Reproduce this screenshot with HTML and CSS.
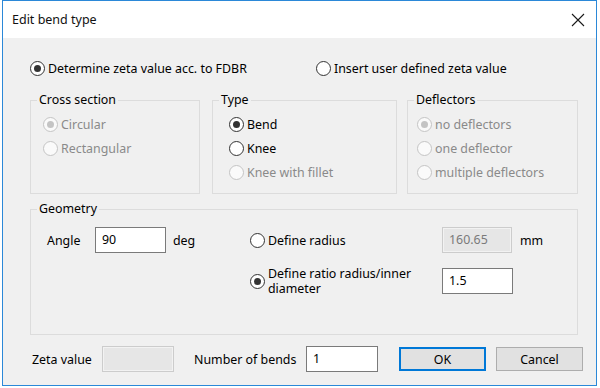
FILE: index.html
```html
<!DOCTYPE html>
<html lang="en">
<head>
    <meta charset="UTF-8">
    <title>Edit bend type</title>
    <link rel="stylesheet" href="styles.css">
</head>
<body>
    <div class="window">
        <div class="titlebar">
            <span class="title">Edit bend type</span>
            <svg class="close" width="14" height="14" viewBox="0 0 14 14">
                <path d="M1 1 L13 13 M13 1 L1 13" stroke="#1a1a1a" stroke-width="1.1" fill="none"/>
            </svg>
        </div>
        <div class="content">
            <div class="mode-row">
                <label class="opt mode-a"><span class="radio checked"></span>Determine zeta value acc. to FDBR</label>
                <label class="opt mode-b"><span class="radio"></span>Insert user defined zeta value</label>
            </div>

            <div class="groups">
                <fieldset class="group cross">
                    <legend>Cross section</legend>
                    <div class="opts">
                        <label class="opt disabled"><span class="radio checked"></span>Circular</label>
                        <label class="opt disabled"><span class="radio"></span>Rectangular</label>
                    </div>
                </fieldset>
                <fieldset class="group type">
                    <legend>Type</legend>
                    <div class="opts">
                        <label class="opt"><span class="radio checked"></span>Bend</label>
                        <label class="opt"><span class="radio"></span>Knee</label>
                        <label class="opt disabled"><span class="radio"></span>Knee with fillet</label>
                    </div>
                </fieldset>
                <fieldset class="group deflectors">
                    <legend>Deflectors</legend>
                    <div class="opts">
                        <label class="opt disabled"><span class="radio checked"></span>no deflectors</label>
                        <label class="opt disabled"><span class="radio"></span>one deflector</label>
                        <label class="opt disabled"><span class="radio"></span>multiple deflectors</label>
                    </div>
                </fieldset>
            </div>

            <fieldset class="group geometry">
                <legend>Geometry</legend>
                <div class="geo">
                    <div class="angle">
                        <span class="lbl">Angle</span>
                        <div class="field">90</div>
                        <span class="unit">deg</span>
                    </div>
                    <div class="radius">
                        <label class="opt"><span class="radio"></span>Define radius</label>
                        <div class="field off">160.65</div>
                        <span class="unit">mm</span>
                        <label class="opt wrap"><span class="radio checked"></span><span class="txt">Define ratio radius/inner diameter</span></label>
                        <div class="field">1.5</div>
                        <span></span>
                    </div>
                </div>
            </fieldset>

            <div class="bottom">
                <span class="lbl zeta">Zeta value</span>
                <div class="field off small"></div>
                <span class="lbl bends">Number of bends</span>
                <div class="field small">1</div>
                <button class="btn default">OK</button>
                <button class="btn">Cancel</button>
            </div>
        </div>
    </div>
</body>
</html>
```

FILE: styles.css
```css
body, html {
    margin: 0;
    padding: 0;
    background: #fff;
    font-family: "Noto Sans", "Open Sans", sans-serif;
    font-size: 12.4px;
    color: #000;
}
.window {
    margin-left: 2px;
    width: 595px;
    height: 386px;
    box-sizing: border-box;
    border: 1px solid #2b88d8;
    display: flex;
    flex-direction: column;
}
.titlebar {
    height: 37px;
    background: #fff;
    display: flex;
    align-items: center;
    justify-content: space-between;
    padding: 0 8px 0 9px;
}
.title {
    font-size: 12.5px;
    color: #111;
}
.close {
    margin-right: 3px;
}
.content {
    flex-grow: 1;
    background: #f0f0f0;
    padding: 22px 0 0 27px;
}

/* radio buttons */
.opt {
    display: flex;
    align-items: center;
    height: 16px;
    white-space: nowrap;
}
.radio {
    width: 15px;
    height: 15px;
    box-sizing: border-box;
    border: 1px solid #333;
    border-radius: 50%;
    background: #fff;
    margin-right: 3px;
    display: flex;
    align-items: center;
    justify-content: center;
    flex-shrink: 0;
}
.radio.checked::after {
    content: "";
    width: 7px;
    height: 7px;
    border-radius: 50%;
    background: #333;
}
.disabled {
    color: #8a8a8a;
}
.disabled .radio {
    border-color: #c4c4c4;
    background: #fafafa;
}
.disabled .radio.checked::after {
    background: #c4c4c4;
}

.mode-row {
    display: flex;
    height: 16px;
}
.mode-a {
    width: 286px;
}

/* group boxes */
.groups {
    display: flex;
    margin-top: 16px;
}
.group {
    margin: 0;
    padding: 8px 0 0 12px;
    border: 1px solid #dcdcdc;
    box-sizing: border-box;
    min-width: 0;
}
.group legend {
    padding: 0 2px;
    line-height: 16px;
    margin-left: -6px;
}
.cross {
    width: 170px;
    height: 102px;
}
.type {
    width: 185px;
    height: 102px;
    margin-left: 12px;
    padding-left: 16px;
}
.type legend {
    margin-left: -10px;
}
.deflectors {
    width: 171px;
    height: 102px;
    margin-left: 10px;
    padding-left: 9px;
}
.deflectors legend {
    margin-left: -3px;
}
.opts {
    display: flex;
    flex-direction: column;
    gap: 8px;
}

.geometry {
    width: 548px;
    height: 134px;
    margin-top: 7px;
    padding: 10px 0 0 16px;
}
.geometry legend {
    margin-left: -10px;
}
.geo {
    display: flex;
}
.angle {
    display: flex;
    align-items: center;
    height: 26px;
    width: 203px;
}
.angle .lbl {
    width: 48px;
}
.angle .unit {
    margin-left: 7px;
}
.radius {
    display: grid;
    grid-template-columns: 192px 70px auto;
    grid-auto-rows: 26px;
    row-gap: 15px;
    align-items: center;
}
.radius .unit {
    margin-left: 8px;
}
.opt.wrap {
    height: auto;
    white-space: normal;
}
.opt.wrap .txt {
    width: 155px;
    line-height: 15px;
}

/* text fields */
.field {
    box-sizing: border-box;
    width: 71px;
    height: 26px;
    border: 1px solid #7a7a7a;
    background: #fff;
    padding-left: 6px;
    line-height: 24px;
}
.field.off {
    width: 70px;
    border-color: #cccccc;
    background: #e6e6e6;
    box-shadow: inset 0 0 0 1px #f2f2f2;
    color: #7a7a7a;
}

.bottom {
    display: flex;
    align-items: center;
    margin-top: 11px;
    height: 26px;
}
.zeta {
    margin-left: 2px;
    width: 70px;
}
.field.small {
    width: 72px;
}
.bends {
    margin-left: 20px;
    width: 112px;
}
.btn {
    font-family: inherit;
    font-size: 12.4px;
    color: #000;
    height: 24px;
    width: 87px;
    margin-left: 10px;
    background: #e1e1e1;
    border: 1px solid #adadad;
    padding: 0;
}
.btn.default {
    margin-left: 21px;
    border-color: #0078d7;
    box-shadow: inset 0 0 0 1px #0078d7;
}
```
